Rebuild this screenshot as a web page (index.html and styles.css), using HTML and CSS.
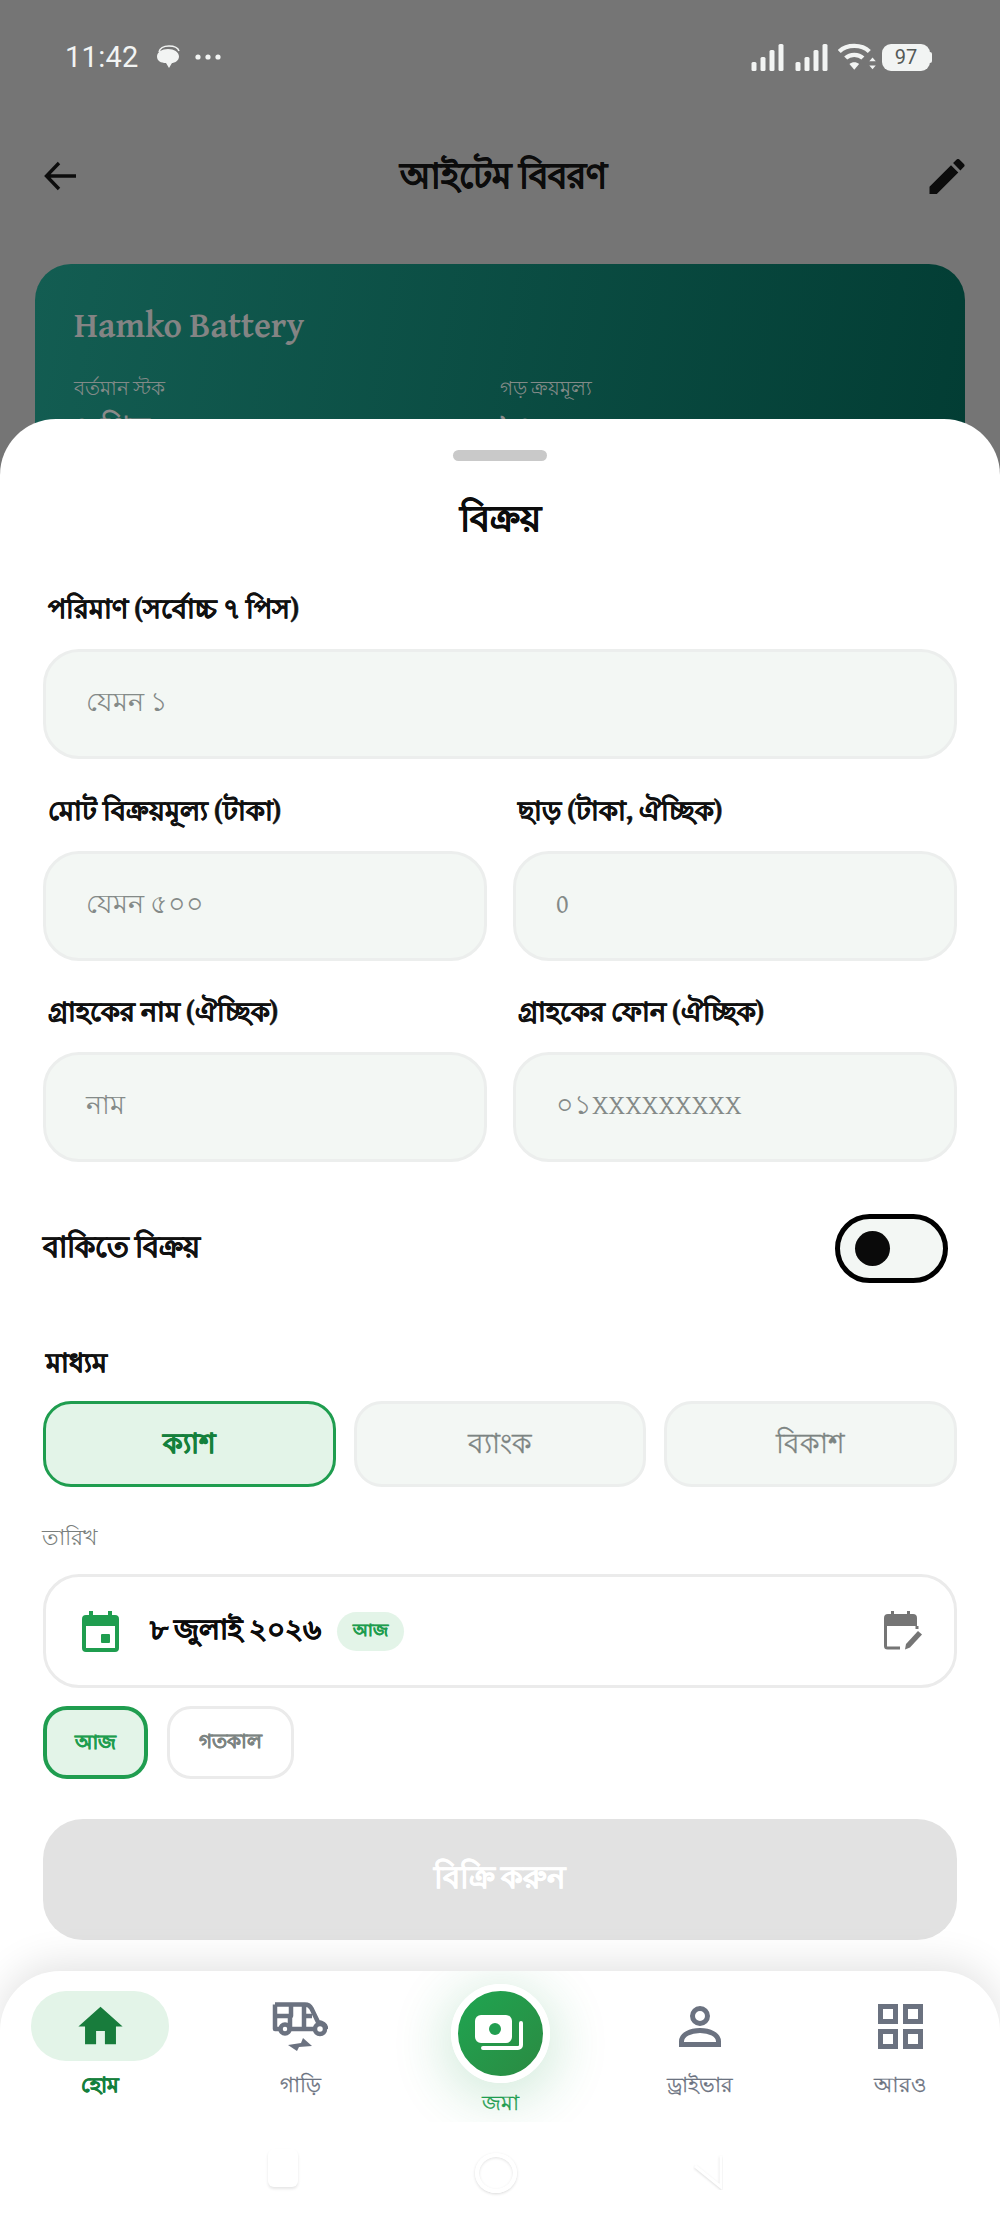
FILE: index.html
```html
<!DOCTYPE html>
<html lang="bn">
<head>
<meta charset="utf-8">
<title>আইটেম বিবরণ</title>
<link rel="stylesheet" href="styles.css">
</head>
<body>
<div class="screen">
  <div class="statusbar">
    <div class="status-left">
      <span class="time">11:42</span>
      <svg class="bubble" width="26" height="24" viewBox="0 0 26 24"><path d="M4 7C5 3 9 1 14 1c5 0 9 2 10 5" fill="none" stroke="#f2f4f3" stroke-width="1.5"/><path d="M13 4c6 0 11 3 11 7.500S19 18 17 18l-3 5-3-5C6 18 2 16 2 11.500S7 4 13 4z" fill="#f2f4f3"/></svg>
      <svg width="26" height="6" viewBox="0 0 26 6"><circle cx="3" cy="3" r="2.600" fill="#f2f4f3"/><circle cx="13" cy="3" r="2.600" fill="#f2f4f3"/><circle cx="23" cy="3" r="2.600" fill="#f2f4f3"/></svg>
    </div>
    <div class="status-right">
      <svg class="signal" width="34" height="27" viewBox="0 0 33 27"><g fill="#f2f4f3"><rect x="0" y="18" width="5" height="9" rx="1.500"/><rect x="9" y="13" width="5" height="14" rx="1.500"/><rect x="18" y="6" width="5" height="21" rx="1.500"/><rect x="27" y="0" width="5" height="27" rx="1.500"/></g></svg>
      <svg class="signal" width="34" height="27" viewBox="0 0 33 27"><g fill="#f2f4f3"><rect x="0" y="18" width="5" height="9" rx="1.500"/><rect x="9" y="13" width="5" height="14" rx="1.500"/><rect x="18" y="6" width="5" height="21" rx="1.500"/><rect x="27" y="0" width="5" height="27" rx="1.500"/></g></svg>
      <svg class="wifi" width="39" height="29" viewBox="0 0 36 27"><g fill="none" stroke="#f2f4f3" stroke-width="4"><path d="M1 8c7-7 21-7 28 0"/><path d="M7 14c4-4 12-4 16 0"/></g><path d="M10.500 19.500c2.500-2 6.500-2 9 0L15 25z" fill="#f2f4f3"/><path d="M29 17l3-3.500 3 3.500zM29 21l3 3.500 3-3.500z" fill="#f2f4f3"/></svg>
      <div class="battery"><span>97</span></div>
    </div>
  </div>

  <header class="appbar">
    <svg width="34" height="30" viewBox="0 0 34 30"><path d="M32 15H3M15 2 2.500 15 15 28" fill="none" stroke="#0c0c0c" stroke-width="3.400"/></svg>
    <h1 class="app-title">আইটেম বিবরণ</h1>
    <svg width="36" height="35" viewBox="3 3 18 18"><path d="M3 17.250V21h3.750L17.810 9.940l-3.750-3.750L3 17.250zM20.710 7.040a1 1 0 0 0 0-1.410l-2.340-2.340a1 1 0 0 0-1.410 0l-1.830 1.830 3.750 3.750 1.830-1.830z" fill="#0c0c0c"/></svg>
  </header>

  <section class="stock-card">
    <div class="stock-name">Hamko Battery</div>
    <div class="stock-grid">
      <div><div class="stock-label">বর্তমান স্টক</div><div class="stock-value">৭ পিস</div></div>
      <div><div class="stock-label">গড় ক্রয়মূল্য</div><div class="stock-value">৳৪৫০</div></div>
    </div>
  </section>

  <section class="sheet">
    <div class="handle"></div>
    <h2 class="sheet-title">বিক্রয়</h2>

    <div class="field-group">
      <div class="field-label">পরিমাণ (সর্বোচ্চ ৭ পিস)</div>
      <div class="input">যেমন ১</div>
    </div>

    <div class="field-row">
      <div class="field-group">
        <div class="field-label">মোট বিক্রয়মূল্য (টাকা)</div>
        <div class="input">যেমন ৫০০</div>
      </div>
      <div class="field-group">
        <div class="field-label">ছাড় (টাকা, ঐচ্ছিক)</div>
        <div class="input">0</div>
      </div>
    </div>

    <div class="field-row">
      <div class="field-group">
        <div class="field-label">গ্রাহকের নাম (ঐচ্ছিক)</div>
        <div class="input">নাম</div>
      </div>
      <div class="field-group">
        <div class="field-label">গ্রাহকের ফোন (ঐচ্ছিক)</div>
        <div class="input">০১XXXXXXXXX</div>
      </div>
    </div>

    <div class="credit-row">
      <span class="credit-label">বাকিতে বিক্রয়</span>
      <div class="toggle"><div class="knob"></div></div>
    </div>

    <div class="field-label method-label">মাধ্যম</div>
    <div class="methods">
      <div class="method active">ক্যাশ</div>
      <div class="method">ব্যাংক</div>
      <div class="method">বিকাশ</div>
    </div>

    <div class="date-label">তারিখ</div>
    <div class="date-box">
      <svg width="37" height="41" viewBox="0 0 37 41"><path d="M7 0h4v4h15V0h4v4h3a4 4 0 0 1 4 4v29a4 4 0 0 1-4 4H4a4 4 0 0 1-4-4V8a4 4 0 0 1 4-4h3zM4 15v22h29V15z" fill="#1f9d4f"/><rect x="19" y="23" width="9" height="9" rx="1" fill="#1f9d4f"/></svg>
      <span class="date-text">৮ জুলাই ২০২৬</span>
      <span class="date-chip">আজ</span>
      <svg class="date-edit" width="40" height="40" viewBox="0 0 40 40"><path d="M7 0h3v3h13V0h3v3h3a4 4 0 0 1 4 4v8H0V7a4 4 0 0 1 4-4h3z" fill="#757575"/><path d="M1.500 14v21a2 2 0 0 0 2 2H16" fill="none" stroke="#757575" stroke-width="3"/><path d="M33 15v3" stroke="#757575" stroke-width="3"/><path d="M22 33l12-13 4 3.500-12 13-5 2z" fill="#757575"/></svg>
    </div>
    <div class="quick-dates">
      <div class="quick active">আজ</div>
      <div class="quick">গতকাল</div>
    </div>
    <div class="submit">বিক্রি করুন</div>
  </section>

  <nav class="bottom-nav">
    <div class="tabs">
      <div class="tab">
        <div class="tab-icon current"><svg width="53" height="53" viewBox="0 0 24 24"><path d="M10 20v-6h4v6h5v-8h3L12 3 2 12h3v8z" fill="#187c3c"/></svg></div>
        <span class="tab-label on">হোম</span>
      </div>
      <div class="tab">
        <div class="tab-icon">
          <svg width="56" height="50" viewBox="0 0 56 50"><g fill="none" stroke="#6b7280" stroke-width="4.500" stroke-linejoin="round"><path d="M3 3.500H33c3 0 5 1 6.500 4L46 21c5 1 8 3 8 7"/><path d="M3 3.500V28h5M19 28h23"/><path d="M3 15H18V28M19 3.500V15H18M32 4V28M32 15H40"/><circle cx="13" cy="28" r="4.500"/><circle cx="48" cy="28" r="5"/></g><path d="M16 44l13-2 2-5 9 8-13 1-2 4z" fill="#6b7280"/></svg>
        </div>
        <span class="tab-label">গাড়ি</span>
      </div>
      <div class="tab">
        <div class="fab">
          <svg width="50" height="38" viewBox="0 0 50 38"><rect x="0" y="0" width="37" height="28" rx="6" fill="#fff"/><circle cx="20" cy="14" r="6" fill="#219e50"/><path d="M46 8v22a3 3 0 0 1-3 3H8" fill="none" stroke="#fff" stroke-width="4" stroke-linecap="round"/></svg>
        </div>
        <span class="tab-label fab-label">জমা</span>
      </div>
      <div class="tab">
        <div class="tab-icon">
          <svg width="42" height="41" viewBox="0 0 42 41"><g fill="none" stroke="#6b7280" stroke-width="5"><circle cx="21" cy="10" r="7.500"/><path d="M2.500 38.500v-3c0-7 9-11 18.500-11s18.500 4 18.500 11v3z"/></g></svg>
        </div>
        <span class="tab-label">ড্রাইভার</span>
      </div>
      <div class="tab">
        <div class="tab-icon">
          <svg width="45" height="45" viewBox="0 0 45 45"><g fill="none" stroke="#6b7280" stroke-width="5"><rect x="2.500" y="2.500" width="15" height="15"/><rect x="27.500" y="2.500" width="15" height="15"/><rect x="2.500" y="27.500" width="15" height="15"/><rect x="27.500" y="27.500" width="15" height="15"/></g></svg>
        </div>
        <span class="tab-label">আরও</span>
      </div>
    </div>
    <div class="sys-nav">
      <div class="sys-square"></div>
      <div class="sys-circle"></div>
      <svg class="sys-back" width="30" height="36" viewBox="0 0 30 36"><path d="M28 2v31L2 12" fill="none" stroke="#fff" stroke-width="3" filter="drop-shadow(0 1px 1px rgba(0,0,0,.14))"/></svg>
    </div>
  </nav>
</div>
</body>
</html>
```
FILE: styles.css
```css
* { box-sizing: border-box; }
html, body { margin: 0; padding: 0; }
body { font-family: "Gentium Plus", "Gentium", serif; }
.screen { position: relative; width: 1000px; height: 2225px; overflow: hidden; background: #757575; }

.statusbar { display: flex; justify-content: space-between; align-items: center; height: 60px; margin-top: 27px; padding: 0 70px 0 65px; }
.status-left { display: flex; align-items: center; gap: 14px; }
.bubble { margin-left: 2px; }
.time { font-family: Roboto, sans-serif; font-size: 29px; color: #f2f4f3; letter-spacing: .3px; }
.status-right { display: flex; align-items: center; gap: 10px; }
.wifi { margin-left: -1px; margin-right: -5px; }
.battery { display: flex; align-items: center; justify-content: center; width: 48px; height: 27px; border-radius: 9px; background: #f2f4f3; position: relative; }
.battery::after { content: ""; position: absolute; right: -2px; top: 8px; width: 3px; height: 11px; border-radius: 0 2px 2px 0; background: #f2f4f3; }
.battery span { font-family: Roboto, sans-serif; font-size: 20px; color: #555a58; }

.appbar { display: flex; justify-content: space-between; align-items: center; height: 60px; margin-top: 59px; padding: 0 35px 0 44px; }
.app-title { margin: 0; font-size: 35px; font-weight: 700; color: #0c0c0c; line-height: 60px; -webkit-text-stroke: .7px #0c0c0c; }

.stock-card { height: 340px; margin: 58px 35px 0; padding: 36px 39px; border-radius: 36px; background: linear-gradient(100deg, #135d52, #023c33); }
.stock-name { font-size: 35px; font-weight: 700; color: #848484; line-height: 50px; }
.stock-grid { display: grid; grid-template-columns: 1fr 1fr; margin-top: 23px; }
.stock-label { font-size: 20px; color: #828a88; line-height: 30px; }
.stock-value { margin-top: 4px; font-size: 30px; font-weight: 700; color: #8a8a8a; line-height: 40px; }

.sheet { position: absolute; left: 0; right: 0; top: 419px; bottom: 0; padding: 31px 43px 0; border-radius: 56px 56px 0 0; background: #fff; }
.handle { width: 94px; height: 11px; margin: 0 auto; border-radius: 6px; background: #c9c9c9; }
.sheet-title { margin: 24px 0 0; height: 66px; font-size: 36px; font-weight: 700; line-height: 66px; text-align: center; color: #0c0c0c; -webkit-text-stroke: .7px #0c0c0c; }

.field-group { flex: 1; min-width: 0; margin-top: 38px; }
.field-label { height: 40px; padding-left: 5px; font-size: 26.700px; font-weight: 700; line-height: 40px; color: #111; -webkit-text-stroke: .5px #111; }
.input { height: 110px; margin-top: 20px; padding: 0 40px; border: 3px solid #eceeed; border-radius: 36px; background: #f3f7f4; font-size: 27px; line-height: 99px; color: #848a88; }
.field-row { display: flex; gap: 26px; margin-top: 32px; }
.field-row .field-group { margin-top: 0; }
.field-row + .field-row { margin-top: 31px; }

.credit-row { display: flex; justify-content: space-between; align-items: center; height: 69px; margin-top: 52px; padding-right: 9px; }
.credit-label { font-size: 29px; font-weight: 700; color: #111; -webkit-text-stroke: .5px #111; }
.toggle { display: flex; align-items: center; width: 113px; height: 69px; padding-left: 15px; border: 5px solid #000; border-radius: 35px; background: #f3f7f4; }
.knob { width: 35px; height: 35px; border-radius: 50%; background: #0a0a0a; }

.method-label { margin-top: 60px; padding-left: 3px; }
.methods { display: grid; grid-template-columns: repeat(3, 1fr); gap: 18px; margin-top: 18px; }
.method { height: 86px; border: 3px solid #eceeed; border-radius: 28px; background: #f3f7f4; font-size: 27.500px; font-weight: 400; line-height: 78px; text-align: center; color: #7c8482; -webkit-text-stroke: .3px #7c8482; }
.method.active { border-color: #1f9d4f; background: #e3f4e8; color: #14803c; font-weight: 700; -webkit-text-stroke: .6px #14803c; }

.date-label { margin-top: 32px; margin-left: -1px; font-size: 22px; line-height: 36px; color: #7a7f7d; }
.date-box { display: flex; align-items: center; height: 114px; margin-top: 19px; padding: 0 30px 0 36px; border: 3px solid #ebebeb; border-radius: 36px; background: #fff; }
.date-text { margin-left: 31px; font-size: 28px; font-weight: 700; color: #0c0c0c; -webkit-text-stroke: .6px #0c0c0c; }
.date-chip { margin-left: 16px; padding: 0 16px; height: 39px; border-radius: 20px; background: #e3f4e8; font-size: 17px; font-weight: 700; line-height: 36px; color: #1f9d4f; -webkit-text-stroke: .3px #1f9d4f; }
.date-edit { margin-left: auto; }
.quick-dates { display: flex; gap: 19px; margin-top: 18px; }
.quick { height: 73px; padding: 0 29px; border: 3px solid #ebebeb; border-radius: 24px; background: #fff; font-size: 20px; font-weight: 700; line-height: 63px; color: #7c8482; -webkit-text-stroke: .3px #7c8482; }
.quick.active { width: 105px; padding: 0; text-align: center; border: 4px solid #1f9d4f; background: #e3f4e8; color: #1f9d4f; -webkit-text-stroke: .3px #1f9d4f; }
.submit { height: 121px; margin-top: 40px; border-radius: 40px; background: #e2e2e2; font-size: 30.500px; font-weight: 700; line-height: 116px; text-align: center; color: #fff; -webkit-text-stroke: .5px #fff; }

.bottom-nav { position: absolute; left: 0; right: 0; bottom: 0; height: 254px; border-radius: 60px 60px 0 0; background: #fff; box-shadow: 0 -6px 40px rgba(0,0,0,.12); }
.tabs { display: grid; grid-template-columns: repeat(5, 1fr); height: 151px; overflow: hidden; border-radius: 60px 60px 0 0; }
.tab { display: flex; flex-direction: column; align-items: center; padding-top: 20px; }
.tab-icon { display: flex; align-items: center; justify-content: center; width: 138px; height: 70px; border-radius: 36px; }
.tab-icon.current { background: #e3f4e8; }
.tab-label { margin-top: 9px; font-size: 21px; line-height: 30px; font-weight: 400; color: #6b7280; -webkit-text-stroke: .3px #6b7280; }
.tab-label.on { color: #14803c; font-weight: 700; -webkit-text-stroke: .5px #14803c; }
.fab { display: flex; align-items: center; justify-content: center; width: 99px; height: 99px; margin-top: -7px; border: 7px solid #fff; border-radius: 50%; background: linear-gradient(135deg, #1fa551, #2b8a42); box-shadow: 0 10px 50px 10px rgba(31,157,79,.18); }
.fab-label { margin-top: 5px; color: #1f9d4f; -webkit-text-stroke: .3px #1f9d4f; }

.sys-nav { position: relative; height: 103px; }
.sys-square { position: absolute; left: 268px; top: 27px; width: 30px; height: 38px; border-radius: 6px; background: #fff; box-shadow: 0 2px 3px rgba(0,0,0,.1); }
.sys-circle { position: absolute; left: 475px; top: 31px; width: 42px; height: 40px; border: 4px solid #fff; border-radius: 50%; box-shadow: 0 1px 3px rgba(0,0,0,.15), inset 0 1px 3px rgba(0,0,0,.12); }
.sys-back { position: absolute; left: 693px; top: 32px; }
```
